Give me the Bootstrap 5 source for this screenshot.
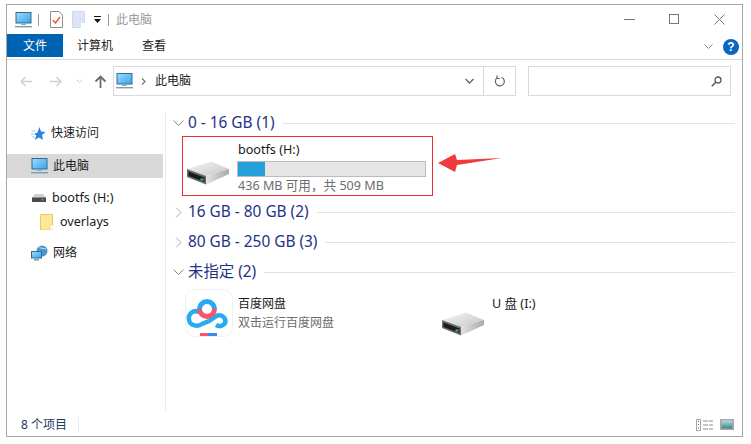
<!DOCTYPE html>
<html lang="zh">
<head>
    <meta charset="UTF-8">
    <title>此电脑</title>
    <link href="https://cdn.jsdelivr.net/npm/bootstrap@5.3.3/dist/css/bootstrap.min.css" rel="stylesheet">
    <style>
        html, body { background: #fff; }
        body { width: 751px; height: 444px; overflow: hidden; font-family: "Noto Sans", "Noto Sans CJK SC", sans-serif; font-size: 12px; color: #1a1a1a; line-height: 16px; }
        .lat { font-size: 12.6px; }
        .win { width: 737px; height: 433px; margin: 4px 0 0 6px; border: 1.5px solid #a6a6a6; }
        .title-row { height: 29px; padding-left: 8px; }
        .title-text { color: #9a9a9a; margin-left: 7px; }
        .qsep { width: 1px; height: 12px; background: #9a9a9a; margin-left: 6px; }
        .q-doc { margin-left: 11px; }
        .q-note { margin-left: 9px; }
        .q-drop { margin-left: 8px; }
        .win-btns { margin-left: auto; width: 118px; padding-right: 17px; }
        .ribbon { height: 26px; border-bottom: 1px solid #dadada; }
        .tab-file { width: 56px; height: 23px; background: #0063b1; color: #fff; }
        .tab-item { height: 23px; color: #222; }
        .tab-calc { margin-left: 14px; }
        .tab-view { margin-left: 29px; }
        .help-btn { width: 16px; height: 16px; border-radius: 50%; background: #0a66c2; color: #fff; font: 700 12px/16px "Liberation Sans", sans-serif; text-align: center; margin: 2px 3px 0 10px; }
        .help-chev { margin-top: 2px; }
        .addr-row { height: 51px; padding: 6px 11px 0 13px; }
        .nav-btns { width: 93px; height: 30px; }
        .nav-fwd { margin-left: 17px; }
        .nav-drop { margin-left: 13px; }
        .nav-up { margin-left: 11px; }
        .addr-box { width: 403px; height: 30px; border: 1px solid #d9d9d9; }
        .addr-crumb { width: 370px; padding: 0 9px 0 2px; }
        .addr-name { margin-left: 9px; }
        .addr-refresh { width: 32px; height: 100%; border-left: 1px solid #d9d9d9; }
        .search-box { width: 203px; height: 30px; margin-left: 12px; border: 1px solid #d9d9d9; padding-right: 8px; }
        .body-row { height: 300px; }
        .side { width: 159px; border-right: 1px solid #ececec; flex: none; padding-top: 10px; }
        .side-item { height: 24px; padding-left: 24px; gap: 5px; }
        .side-item.sel { background: #d9d9d9; width: 156px; margin: 9px 0 8px; }
        .side-sub { padding-left: 33px; margin-bottom: 7px; gap: 7px; }
        .side-drive { padding-left: 25px; gap: 6px; }
        .main { flex: 1; margin-top: -3px; padding: 0 7px; position: relative; }
        .grp-head { height: 30px; color: #1e3287; font-size: 15.4px; gap: 4px; }
        .grp-line { flex: 1; height: 1px; background: #e3e3e3; margin-left: 4px; }
        .drive-box { width: 251px; height: 60px; margin: -2px 0 1px 9px; border: 1px solid #ef2d2d; padding: 3px 6px 0 3px; }
        .drive-pic { width: 51px; padding-top: 21px; }
        .meter { height: 16px; border: 1px solid #bcbcbc; background: #e6e6e6; margin-top: 1px; }
        .meter-fill { height: 100%; background: #26a0da; }
        .sub-text { color: #6d6d6d; }
        .drive-name { height: 20px; line-height: 20px; margin-left: 1px; }
        .drive-free { margin: 1px 0 0 1px; }
        .unset-items { padding: 2px 0 0 12px; }
        .baidu { width: 48px; height: 48px; }
        .item-a { width: 256px; gap: 5px; }
        .item-text { padding-top: 5px; line-height: 19px; }
        .udisk-pic { padding-top: 23px; margin-right: 7px; }
        .point-arrow { position: absolute; left: 272px; top: 46px; }
        .status { height: 24px; padding: 3px 0 0 14px; color: #1f3864; }
        .status-sep { width: 1px; height: 16px; background: #ececec; margin-left: 11px; }
        .view-btns { margin-left: auto; gap: 7px; padding-right: 8px; }
    </style>
</head>
<body>
<svg width="0" height="0" class="position-absolute">
    <defs>
        <linearGradient id="scr" x1="0" y1="0" x2="1" y2="1"><stop offset="0" stop-color="#9fdcfb"/><stop offset="1" stop-color="#37a3ea"/></linearGradient>
        <linearGradient id="top" x1="0" y1="0" x2="1" y2="1"><stop offset="0" stop-color="#f7f7f7"/><stop offset="1" stop-color="#c4c4c4"/></linearGradient>
        <linearGradient id="rgt" x1="0" y1="0" x2="1" y2="0"><stop offset="0" stop-color="#e2e2e2"/><stop offset="1" stop-color="#a9a9a9"/></linearGradient>
        <linearGradient id="pic" x1="0" y1="0" x2="0" y2="1"><stop offset="0" stop-color="#bfe3ee"/><stop offset="1" stop-color="#2f7f7a"/></linearGradient>
        <symbol id="pc" viewBox="0 0 17 16">
            <rect x="1" y="0.5" width="15" height="10.5" fill="url(#scr)" stroke="#2c6d96"/>
            <rect x="6" y="11.5" width="5" height="1.5" fill="#93a7b5"/>
            <rect x="0" y="14" width="17" height="1.4" fill="#7f9bb0"/>
        </symbol>
        <symbol id="drive" viewBox="0 0 44 24">
            <path d="M1 8 25 .5 43 8 20 15Z" fill="url(#top)"/>
            <path d="M20 15 43 8V13L20 23.500Z" fill="url(#rgt)"/>
            <path d="M1 8 20 15V23.500L1 16Z" fill="#6a6a6a"/>
            <path d="M2.500 10.500 18.500 16.500V21L2.500 15Z" fill="#1c1c1c"/>
            <rect x="14.500" y="17.500" width="3" height="2" fill="#35c94a"/>
        </symbol>
    </defs>
</svg>

<div class="win d-flex flex-column">
    <!-- title bar -->
    <div class="title-row d-flex align-items-center">
        <svg width="17" height="16"><use href="#pc"/></svg>
        <span class="qsep"></span>
        <svg class="q-doc" width="13" height="17" viewBox="0 0 13 17"><path d="M.5.5H9L12.500 4V16.500H.5Z" fill="#fff" stroke="#8c8c8c"/><path d="M3 9 5.500 12 10 6" fill="none" stroke="#e8622c" stroke-width="1.500"/></svg>
        <svg class="q-note" width="13" height="17" viewBox="0 0 13 17"><path d="M.5.5H12.500V16.500H.5Z" fill="#dbe5f3" stroke="#cfd9e8"/><rect x="9" y="12" width="4" height="5" fill="#fff"/></svg>
        <svg class="q-drop" width="9" height="8" viewBox="0 0 9 8"><rect x="1" y="0" width="7" height="1" fill="#111"/><path d="M1 3H8L4.500 7Z" fill="#111"/></svg>
        <span class="qsep"></span>
        <span class="title-text">此电脑</span>
        <div class="win-btns d-flex justify-content-between align-items-center">
            <svg width="11" height="11" viewBox="0 0 11 11"><path d="M0 5.500H11" stroke="#777"/></svg>
            <svg width="11" height="11" viewBox="0 0 11 11"><rect x=".5" y=".5" width="9" height="9" fill="none" stroke="#777"/></svg>
            <svg width="11" height="11" viewBox="0 0 11 11"><path d="M.5.5 10.500 10.500M10.500.5.5 10.500" stroke="#777"/></svg>
        </div>
    </div>
    <!-- ribbon tabs -->
    <div class="ribbon d-flex align-items-start">
        <div class="tab-file d-flex align-items-center justify-content-center">文件</div>
        <div class="tab-item tab-calc d-flex align-items-center">计算机</div>
        <div class="tab-item tab-view d-flex align-items-center">查看</div>
        <div class="ms-auto d-flex align-items-center tab-item">
            <svg class="help-chev" width="9" height="6" viewBox="0 0 9 6"><path d="M.5.5 4.500 4.500 8.500.5" fill="none" stroke="#8a8a8a"/></svg>
            <div class="help-btn">?</div>
        </div>
    </div>
    <!-- address row -->
    <div class="addr-row d-flex align-items-start">
        <div class="nav-btns d-flex align-items-center">
            <svg width="13" height="11" viewBox="0 0 13 11"><path d="M1 5.500H12M5.500 1 1 5.500 5.500 10" fill="none" stroke="#cfcfcf" stroke-width="1.500"/></svg>
            <svg class="nav-fwd" width="13" height="11" viewBox="0 0 13 11"><path d="M0 5.500H11M6.500 1 11 5.500 6.500 10" fill="none" stroke="#cfcfcf" stroke-width="1.500"/></svg>
            <svg class="nav-drop" width="7" height="5" viewBox="0 0 7 5"><path d="M.5.5 3.500 3.500 6.500.5" fill="none" stroke="#cfcfcf"/></svg>
            <svg class="nav-up" width="13" height="13" viewBox="0 0 13 13"><path d="M6.500 13V2M1.500 6.500 6.500 1.500 11.500 6.500" fill="none" stroke="#6b6b6b" stroke-width="1.800"/></svg>
        </div>
        <div class="addr-box d-flex align-items-center">
            <div class="addr-crumb d-flex align-items-center">
                <svg width="17" height="16"><use href="#pc"/></svg>
                <svg class="ms-2" width="5" height="7" viewBox="0 0 5 7"><path d="M1 .5 4 3.500 1 6.500" fill="none" stroke="#777" stroke-width="1.200"/></svg>
                <span class="addr-name">此电脑</span>
                <svg class="ms-auto" width="9" height="6" viewBox="0 0 9 6"><path d="M.5 1 4.500 5 8.500 1" fill="none" stroke="#666" stroke-width="1.300"/></svg>
            </div>
            <div class="addr-refresh d-flex align-items-center justify-content-center">
                <svg width="12" height="13" viewBox="0 0 12 13"><path d="M7.500 2.200A4.500 4.500 0 1 1 3 2.900" fill="none" stroke="#666" stroke-width="1.200"/><path d="M3 .5V3.500H6" fill="none" stroke="#666" stroke-width="1.200"/></svg>
            </div>
        </div>
        <div class="search-box d-flex align-items-center justify-content-end">
            <svg width="11" height="11" viewBox="0 0 11 11"><circle cx="7" cy="4" r="3" fill="none" stroke="#555" stroke-width="1.300"/><path d="M4.800 6.200 .8 10.200" stroke="#555" stroke-width="1.500"/></svg>
        </div>
    </div>
    <!-- sidebar and content -->
    <div class="body-row d-flex">
        <div class="side">
            <div class="side-item d-flex align-items-center">
                <svg width="15" height="15" viewBox="0 0 15 15"><path d="M8.500 1 10 5.500 14.500 6 11 9 12 14 8 11.500 3.500 14 5.500 9.500 3 8 6.500 6.500Z" fill="#2a83dc"/><path d="M.5 5H4M0 8H3M1 11H3.500" stroke="#9ccaf0"/></svg>
                <span>快速访问</span>
            </div>
            <div class="side-item sel d-flex align-items-center">
                <svg width="17" height="16"><use href="#pc"/></svg>
                <span>此电脑</span>
            </div>
            <div class="side-item side-drive d-flex align-items-center">
                <svg width="14" height="8" viewBox="0 0 14 8"><path d="M3 0H11L14 3.500V8H0V3.500Z" fill="#cfcfcf"/><rect y="3.500" width="14" height="4.500" fill="#4a4a4a"/><rect x="9.500" y="5" width="2" height="1.500" fill="#35c94a"/></svg>
                <span class="lat">bootfs (H:)</span>
            </div>
            <div class="side-item side-sub d-flex align-items-center">
                <svg width="13" height="16" viewBox="0 0 13 16"><path d="M.5.500H12.500V16H.5Z" fill="#fde79b" stroke="#edc95a"/><rect x="10" y="11" width="3" height="5" fill="#fff" stroke="#edc95a" stroke-width=".6"/></svg>
                <span class="lat">overlays</span>
            </div>
            <div class="side-item d-flex align-items-center">
                <svg width="17" height="16" viewBox="0 0 17 16"><circle cx="11" cy="6" r="5.500" fill="#4f95c9"/><path d="M8 2C10 4 13 3 15 4" stroke="#cfe6f5" fill="none"/><rect x=".5" y="6.500" width="10" height="6.500" fill="url(#scr)" stroke="#2c6d96"/><rect x="3" y="14" width="5" height="1.500" fill="#7f9bb0"/></svg>
                <span>网络</span>
            </div>
        </div>
        <div class="main">
            <div class="grp-head d-flex align-items-center">
                <svg width="11" height="7" viewBox="0 0 11 7"><path d="M.5.5 5.500 5.500 10.500.5" fill="none" stroke="#888"/></svg>
                <span>0 - 16 GB (1)</span><span class="grp-line"></span>
            </div>
            <div class="drive-box d-flex">
                <div class="drive-pic"><svg width="44" height="24"><use href="#drive"/></svg></div>
                <div class="flex-grow-1">
                    <div class="drive-name lat">bootfs (H:)</div>
                    <div class="meter"><div class="meter-fill" style="width: 14.3%"></div></div>
                    <div class="drive-free sub-text lat">436 MB 可用，共 509 MB</div>
                </div>
            </div>
            <div class="grp-head d-flex align-items-center">
                <svg width="11" height="11" viewBox="0 0 11 11"><path d="M3 .5 8 5.500 3 10.500" fill="none" stroke="#aaa"/></svg>
                <span>16 GB - 80 GB (2)</span><span class="grp-line"></span>
            </div>
            <div class="grp-head d-flex align-items-center">
                <svg width="11" height="11" viewBox="0 0 11 11"><path d="M3 .5 8 5.500 3 10.500" fill="none" stroke="#aaa"/></svg>
                <span>80 GB - 250 GB (3)</span><span class="grp-line"></span>
            </div>
            <div class="grp-head d-flex align-items-center">
                <svg width="11" height="7" viewBox="0 0 11 7"><path d="M.5.5 5.500 5.500 10.500.5" fill="none" stroke="#888"/></svg>
                <span>未指定 (2)</span><span class="grp-line"></span>
            </div>
            <div class="unset-items d-flex">
                <div class="item-a d-flex">
                    <svg class="baidu" viewBox="0 0 48 48">
                        <rect x=".5" y=".5" width="47" height="47" rx="9" fill="#fff" stroke="#f0f0f0"/>
                        <path d="M14 23C7 20 3 26 4 31 5 37 13 38 17 35L24 32 30 28C33 25 38 26 40 30 42 35 36 39 31 36" fill="none" stroke="#26aaf0" stroke-width="4.500"/>
                        <path d="M14.500 20A7.500 7.500 0 0 0 29.500 20" fill="none" stroke="#f4566b" stroke-width="5"/>
                        <path d="M14.500 20A7.500 7.500 0 0 1 29.500 20" fill="none" stroke="#26aaf0" stroke-width="5"/>
                        <rect x="15" y="44" width="8" height="3" fill="#f4566b"/>
                        <rect x="23" y="44" width="9" height="3" fill="#2f8cf0"/>
                    </svg>
                    <div class="item-text">
                        <div>百度网盘</div>
                        <div class="sub-text">双击运行百度网盘</div>
                    </div>
                </div>
                <div class="udisk-pic"><svg width="44" height="24"><use href="#drive"/></svg></div>
                <div class="item-text lat">U 盘 (I:)</div>
            </div>
            <svg class="point-arrow" width="66" height="20" viewBox="0 0 66 20"><path d="M0 9 17 0 19 6 64 4 19 11 17 18Z" fill="#ef3b3b"/></svg>
        </div>
    </div>
    <!-- status bar -->
    <div class="status d-flex align-items-center">
        <span>8 个项目</span><span class="status-sep"></span>
        <div class="view-btns d-flex align-items-center">
            <svg width="17" height="12" viewBox="0 0 17 12">
                <rect x=".5" y=".5" width="4" height="11" fill="#fff" stroke="#a8a8a8"/>
                <rect x="2" y="2" width="1" height="1" fill="#3f7f8f"/><rect x="2" y="5" width="1" height="1" fill="#3f7f8f"/><rect x="2" y="8.500" width="1" height="1" fill="#c0504d"/>
                <path d="M7 2H17M7 6H17M7 10H17" stroke="#8a8a8a" stroke-dasharray="5 1 4"/>
            </svg>
            <svg width="14" height="11" viewBox="0 0 14 11"><rect x=".75" y=".75" width="12.500" height="9.500" fill="url(#pic)" stroke="#a8a8a8" stroke-width="1.500"/></svg>
        </div>
    </div>
</div>

<script src="https://cdn.jsdelivr.net/npm/bootstrap@5.3.3/dist/js/bootstrap.bundle.min.js"></script>
</body>
</html>
